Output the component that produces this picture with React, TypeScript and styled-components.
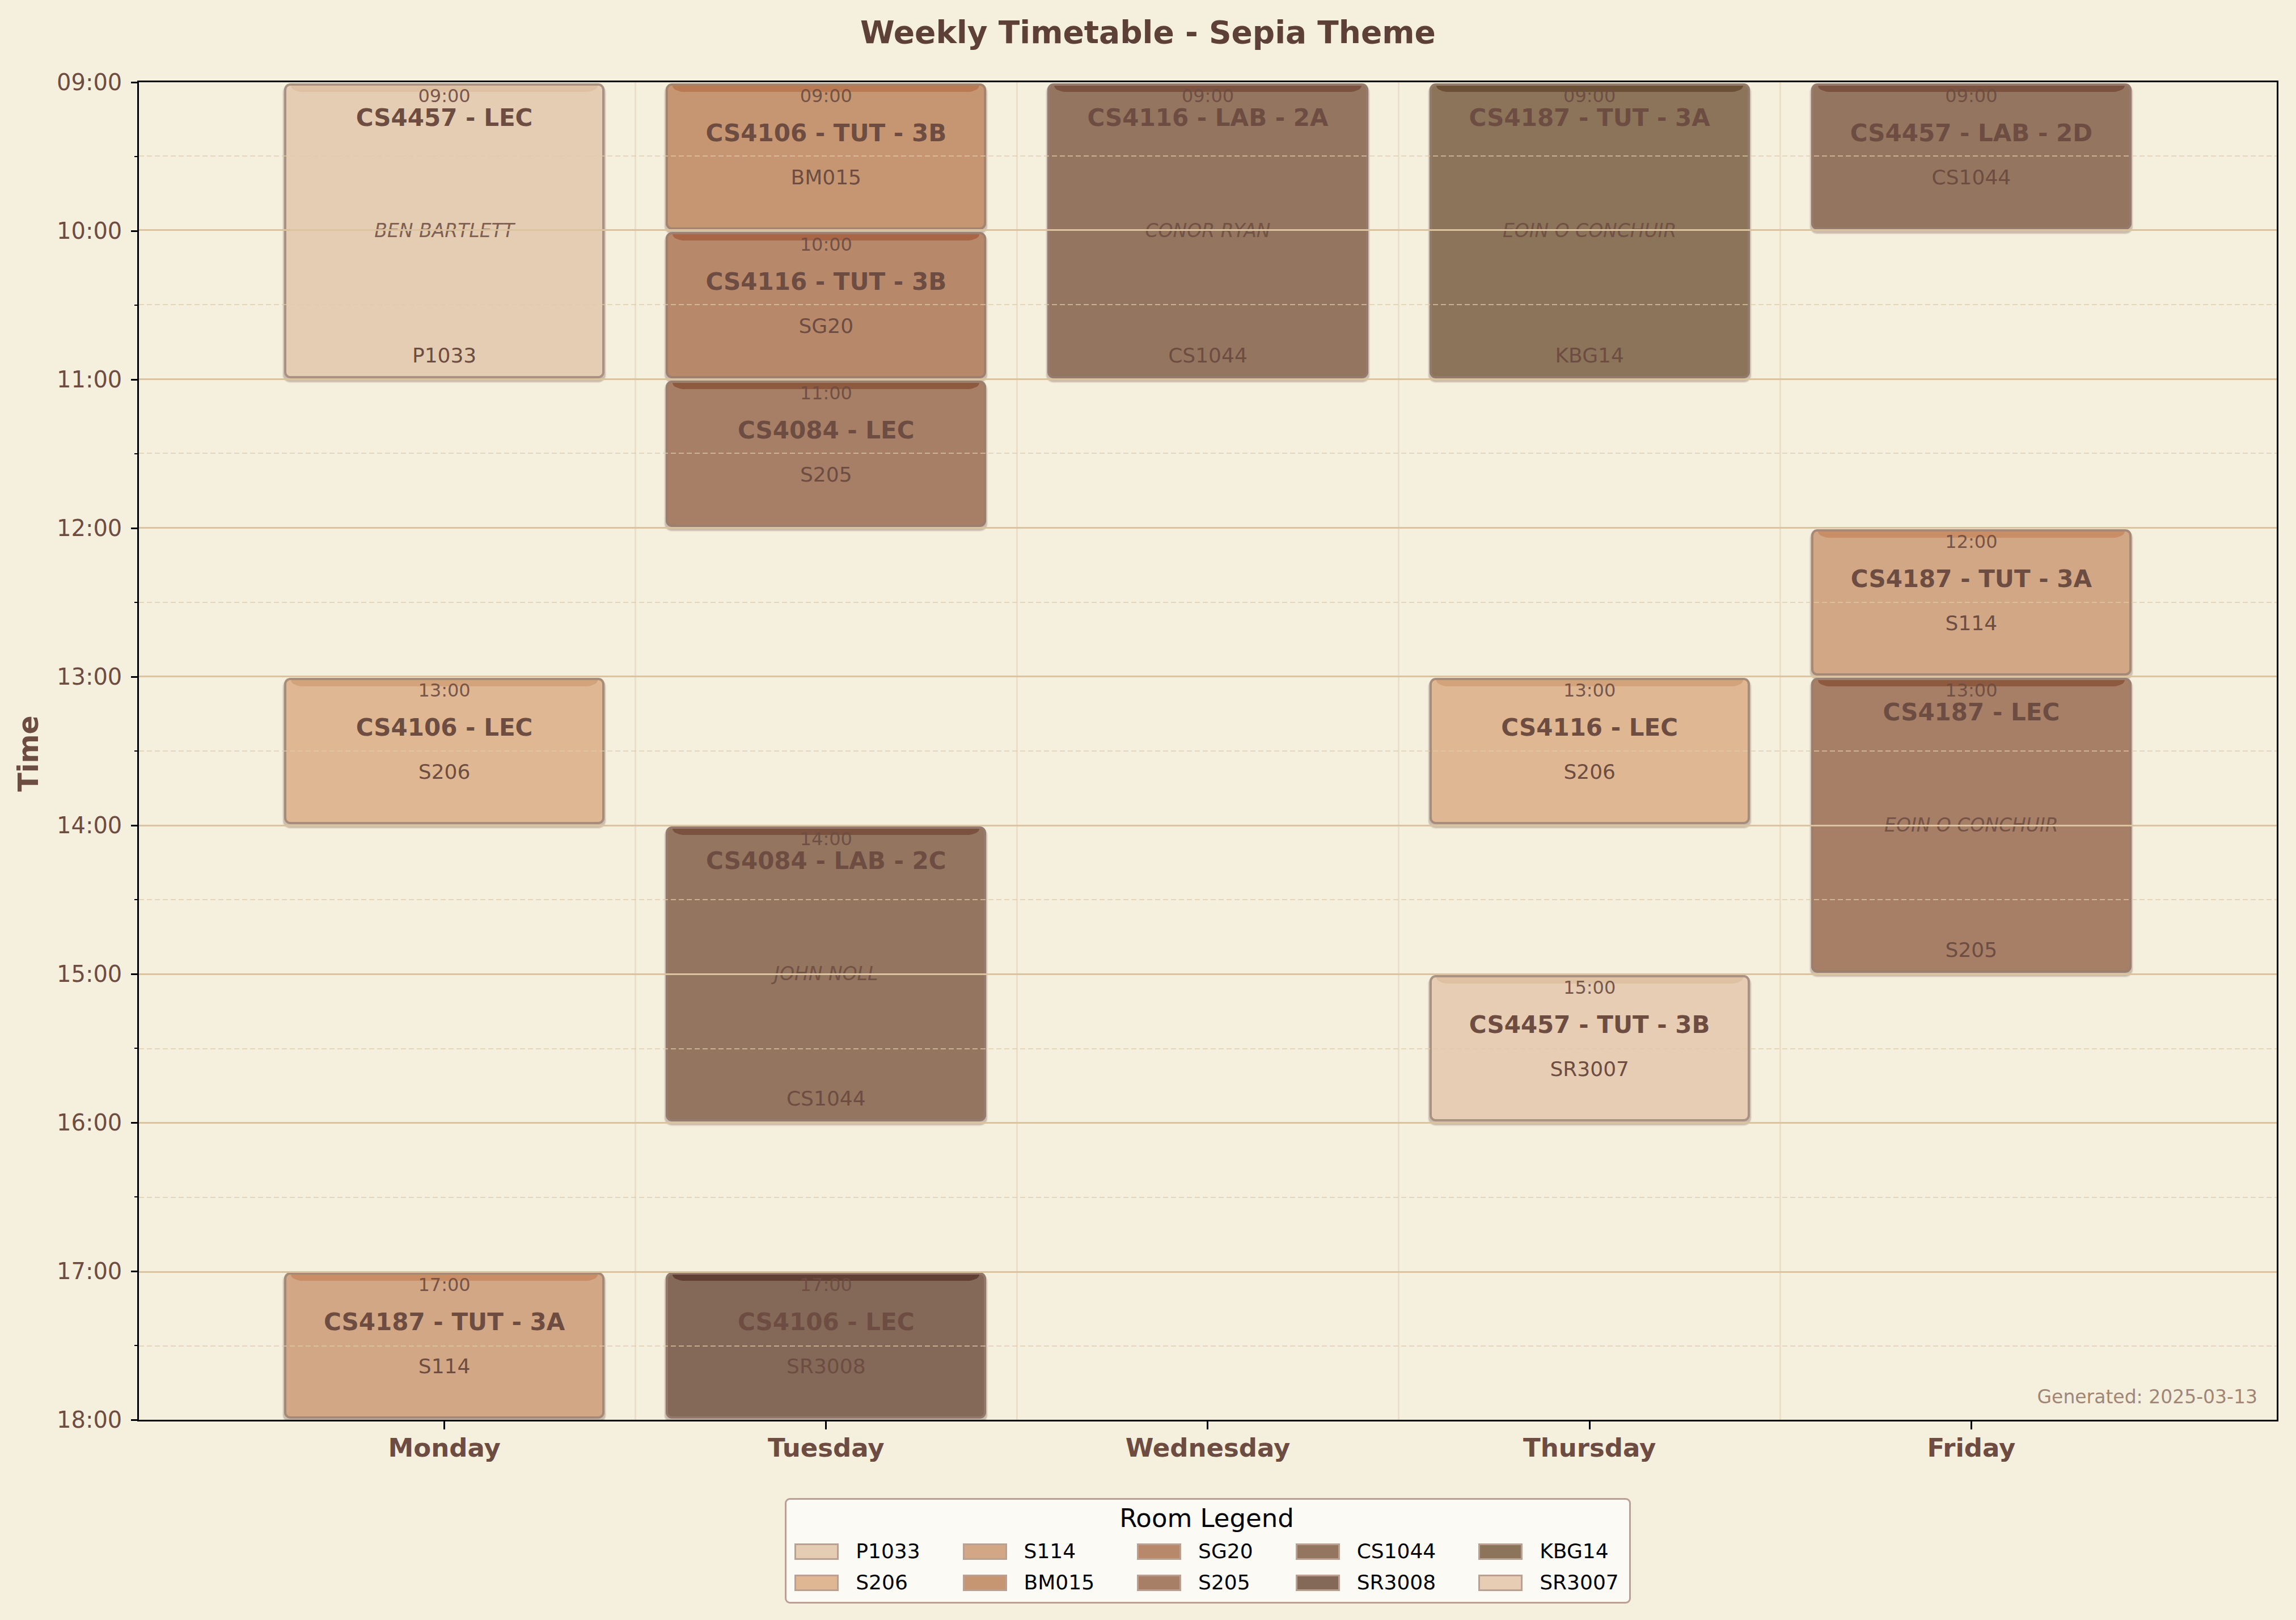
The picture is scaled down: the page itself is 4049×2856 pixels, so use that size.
import React from "react";
import styled, { createGlobalStyle } from "styled-components";

const GlobalStyle = createGlobalStyle`
  html, body { margin: 0; padding: 0; background: #f5efde; }
  body { font-family: "DejaVu Sans", "Liberation Sans", sans-serif; }
  * { box-sizing: border-box; }
`;

const TEXT = "#6d4c41";

type Room = { fill: string; band: string };
const ROOMS: Record<string, Room> = {
  P1033: { fill: "#e5cdb3", band: "#dec1a3" },
  S206: { fill: "#dfb893", band: "#d3a37b" },
  S114: { fill: "#d2a785", band: "#c98e66" },
  BM015: { fill: "#c69672", band: "#b97953" },
  SG20: { fill: "#b8886b", band: "#a86646" },
  S205: { fill: "#a67f66", band: "#8d5a40" },
  CS1044: { fill: "#947560", band: "#7b5240" },
  SR3008: { fill: "#846858", band: "#613f32" },
  KBG14: { fill: "#8c745a", band: "#6b5035" },
  SR3007: { fill: "#e6cdb3", band: "#dec1a3" },
};

const LEGEND_ORDER = [
  "P1033", "S206", "S114", "BM015", "SG20", "S205", "CS1044", "SR3008", "KBG14", "SR3007",
];

type Ev = { start: number; end: number; title: string; room: string; who?: string };

const DAYS: { name: string; events: Ev[] }[] = [
  {
    name: "Monday",
    events: [
      { start: 9, end: 11, title: "CS4457 - LEC", who: "BEN BARTLETT", room: "P1033" },
      { start: 13, end: 14, title: "CS4106 - LEC", room: "S206" },
      { start: 17, end: 18, title: "CS4187 - TUT - 3A", room: "S114" },
    ],
  },
  {
    name: "Tuesday",
    events: [
      { start: 9, end: 10, title: "CS4106 - TUT - 3B", room: "BM015" },
      { start: 10, end: 11, title: "CS4116 - TUT - 3B", room: "SG20" },
      { start: 11, end: 12, title: "CS4084 - LEC", room: "S205" },
      { start: 14, end: 16, title: "CS4084 - LAB - 2C", who: "JOHN NOLL", room: "CS1044" },
      { start: 17, end: 18, title: "CS4106 - LEC", room: "SR3008" },
    ],
  },
  {
    name: "Wednesday",
    events: [
      { start: 9, end: 11, title: "CS4116 - LAB - 2A", who: "CONOR RYAN", room: "CS1044" },
    ],
  },
  {
    name: "Thursday",
    events: [
      { start: 9, end: 11, title: "CS4187 - TUT - 3A", who: "EOIN O CONCHUIR", room: "KBG14" },
      { start: 13, end: 14, title: "CS4116 - LEC", room: "S206" },
      { start: 15, end: 16, title: "CS4457 - TUT - 3B", room: "SR3007" },
    ],
  },
  {
    name: "Friday",
    events: [
      { start: 9, end: 10, title: "CS4457 - LAB - 2D", room: "CS1044" },
      { start: 12, end: 13, title: "CS4187 - TUT - 3A", room: "S114" },
      { start: 13, end: 15, title: "CS4187 - LEC", who: "EOIN O CONCHUIR", room: "S205" },
    ],
  },
];

const HOURS = [9, 10, 11, 12, 13, 14, 15, 16, 17, 18];
const pad = (h: number) => `${h < 10 ? "0" : ""}${h}:00`;

/* ---------- page ---------- */
const Page = styled.div`
  width: 4049px;
  height: 2856px;
  background: #f5efde;
  display: flex;
  flex-direction: column;
  overflow: hidden;
`;

const Title = styled.h1`
  margin: 0;
  height: 142px;
  padding-top: 25px;
  font-size: 55px;
  line-height: 64px;
  font-weight: bold;
  color: #5d4037;
  text-align: center;
`;

const ChartRow = styled.div`
  display: flex;
  height: 2364px;
`;

/* ---------- y axis ---------- */
const YAxis = styled.div`
  width: 242px;
  display: flex;
`;

const AxisTitleCol = styled.div`
  width: 100px;
  display: flex;
  align-items: center;
  justify-content: center;
`;

const AxisTitle = styled.div`
  transform: rotate(-90deg) translateX(-4px);
  white-space: nowrap;
  font-size: 49px;
  font-weight: bold;
  color: ${TEXT};
`;

const TickLabels = styled.div`
  flex: 1;
  align-self: flex-start;
  height: 2404px;
  margin-top: -20px;
  padding-right: 16px;
  display: flex;
  flex-direction: column;
  justify-content: space-between;
  align-items: flex-end;
`;

const TickLabel = styled.div`
  font-size: 40px;
  line-height: 46px;
  height: 46px;
  color: ${TEXT};
`;

const TickCol = styled.div`
  width: 14px;
  align-self: flex-start;
  height: 2361px;
  margin-top: 1.5px;
  display: flex;
  flex-direction: column;
  justify-content: space-between;
  align-items: flex-end;
`;

const YTick = styled.div<{ $major: boolean }>`
  width: ${(p) => (p.$major ? 14 : 8)}px;
  height: ${(p) => (p.$major ? 3 : 2.5)}px;
  background: #000;
`;

/* ---------- axes ---------- */
const Axes = styled.div`
  position: relative;
  width: 3776px;
  height: 2364px;
  border: 3px solid #000;
  padding: 0 202px;
  display: grid;
  grid-template-columns: repeat(5, 1fr);
  overflow: hidden;
`;

const DayColumn = styled.div<{ $sep: boolean }>`
  position: relative;
  display: grid;
  grid-template-rows: repeat(9, 1fr);
  &::after {
    content: "";
    display: ${(p) => (p.$sep ? "block" : "none")};
    position: absolute;
    top: 0;
    bottom: 0;
    right: -1.5px;
    width: 3px;
    background: #ebdfca;
  }
`;

const Block = styled.div<{ $fill: string; $band: string; $long: boolean }>`
  position: relative;
  margin: 2px 54px;
  border: 4px solid rgba(150, 126, 114, 0.75);
  border-radius: 11px;
  background: ${(p) => p.$fill};
  box-shadow: 0 5px 2px 2px rgba(145, 120, 108, 0.42);
  display: flex;
  flex-direction: column;
  align-items: center;
  padding-top: 1px;
  padding-bottom: ${(p) => (p.$long ? 15 : 0)}px;
  color: ${TEXT};
  &::before {
    content: "";
    position: absolute;
    top: 0;
    left: 8px;
    right: 8px;
    height: 11px;
    background: ${(p) => p.$band};
    border-radius: 0 0 22px 22px / 0 0 11px 11px;
  }
`;

const TimeText = styled.div`
  position: relative;
  font-size: 32px;
  line-height: 34px;
  opacity: 0.9;
`;

const CourseTitle = styled.div<{ $long: boolean }>`
  font-size: 42px;
  line-height: 50px;
  font-weight: bold;
  margin-top: ${(p) => (p.$long ? -3 : 24)}px;
  white-space: nowrap;
`;

const Middle = styled.div`
  flex: 1;
  display: flex;
  align-items: center;
  padding-bottom: 25px;
`;

const Instructor = styled.div`
  font-size: 33px;
  line-height: 40px;
  font-style: italic;
  opacity: 0.85;
  white-space: nowrap;
`;

const RoomText = styled.div<{ $long: boolean }>`
  font-size: 36px;
  line-height: 42px;
  margin-top: ${(p) => (p.$long ? 0 : 32)}px;
`;

const GridOverlay = styled.div`
  position: absolute;
  inset: 0;
  display: flex;
  flex-direction: column;
  pointer-events: none;
`;

const HourBand = styled.div<{ $first: boolean }>`
  flex: 1;
  position: relative;
  border-top: ${(p) => (p.$first ? "none" : "3px solid #dcc3a0")};
  &::after {
    content: "";
    position: absolute;
    left: 0;
    right: 0;
    top: calc(50% - 1px);
    height: 2px;
    background: repeating-linear-gradient(
      90deg,
      rgba(222, 202, 170, 0.7) 0 9px,
      transparent 9px 14px
    );
  }
`;

const Generated = styled.div`
  position: absolute;
  right: 34px;
  bottom: 20px;
  font-size: 33px;
  line-height: 40px;
  color: #a08676;
`;

/* ---------- x axis ---------- */
const XAxisRow = styled.div`
  margin-left: 447px;
  width: 3366px;
  display: grid;
  grid-template-columns: repeat(5, 1fr);
`;

const XCell = styled.div`
  display: flex;
  flex-direction: column;
  align-items: center;
`;

const XTick = styled.div`
  width: 3px;
  height: 14px;
  background: #000;
`;

const DayLabel = styled.div`
  margin-top: 7px;
  font-size: 45px;
  line-height: 52px;
  font-weight: bold;
  color: ${TEXT};
`;

/* ---------- legend ---------- */
const LegendWrap = styled.div`
  margin-top: 62px;
  margin-left: 242px;
  width: 3776px;
  display: flex;
  justify-content: center;
`;

const LegendBox = styled.div`
  border: 3px solid #b9a093;
  border-radius: 9px;
  background: #fcfaf5;
  padding: 8px 18px 14px 14px;
  display: flex;
  flex-direction: column;
  align-items: center;
`;

const LegendTitle = styled.div`
  font-size: 45px;
  line-height: 50px;
  color: #000;
`;

const LegendGrid = styled.div`
  margin-top: 13px;
  align-self: stretch;
  display: grid;
  grid-template-rows: repeat(2, 40px);
  grid-auto-flow: column;
  column-gap: 75px;
  row-gap: 15px;
`;

const LegendItem = styled.div`
  display: flex;
  align-items: center;
  gap: 30px;
  font-size: 36px;
  line-height: 40px;
  color: #000;
`;

const Swatch = styled.div<{ $fill: string }>`
  width: 78px;
  height: 29px;
  border: 3px solid #b9a093;
  background: ${(p) => p.$fill};
`;

function EventBlock({ ev }: { ev: Ev }) {
  const long = ev.end - ev.start >= 2;
  const c = ROOMS[ev.room];
  return (
    <Block
      $fill={c.fill}
      $band={c.band}
      $long={long}
      style={{ gridRow: `${ev.start - 8} / ${ev.end - 8}` }}
    >
      <TimeText>{pad(ev.start)}</TimeText>
      <CourseTitle $long={long}>{ev.title}</CourseTitle>
      {long && (
        <Middle>
          <Instructor>{ev.who}</Instructor>
        </Middle>
      )}
      <RoomText $long={long}>{ev.room}</RoomText>
    </Block>
  );
}

export default function App() {
  const ticks: boolean[] = [];
  for (let i = 0; i <= 18; i++) ticks.push(i % 2 === 0);
  return (
    <>
      <GlobalStyle />
      <Page>
        <Title>Weekly Timetable - Sepia Theme</Title>
        <ChartRow>
          <YAxis>
            <AxisTitleCol>
              <AxisTitle>Time</AxisTitle>
            </AxisTitleCol>
            <TickLabels>
              {HOURS.map((h) => (
                <TickLabel key={h}>{pad(h)}</TickLabel>
              ))}
            </TickLabels>
            <TickCol>
              {ticks.map((m, i) => (
                <YTick key={i} $major={m} />
              ))}
            </TickCol>
          </YAxis>
          <Axes>
            {DAYS.map((d, i) => (
              <DayColumn key={d.name} $sep={i < DAYS.length - 1}>
                {d.events.map((ev, j) => (
                  <EventBlock key={j} ev={ev} />
                ))}
              </DayColumn>
            ))}
            <GridOverlay>
              {HOURS.slice(0, 9).map((h, i) => (
                <HourBand key={h} $first={i === 0} />
              ))}
            </GridOverlay>
            <Generated>Generated: 2025-03-13</Generated>
          </Axes>
        </ChartRow>
        <XAxisRow>
          {DAYS.map((d) => (
            <XCell key={d.name}>
              <XTick />
              <DayLabel>{d.name}</DayLabel>
            </XCell>
          ))}
        </XAxisRow>
        <LegendWrap>
          <LegendBox>
            <LegendTitle>Room Legend</LegendTitle>
            <LegendGrid>
              {LEGEND_ORDER.map((r) => (
                <LegendItem key={r}>
                  <Swatch $fill={ROOMS[r].fill} />
                  {r}
                </LegendItem>
              ))}
            </LegendGrid>
          </LegendBox>
        </LegendWrap>
      </Page>
    </>
  );
}
